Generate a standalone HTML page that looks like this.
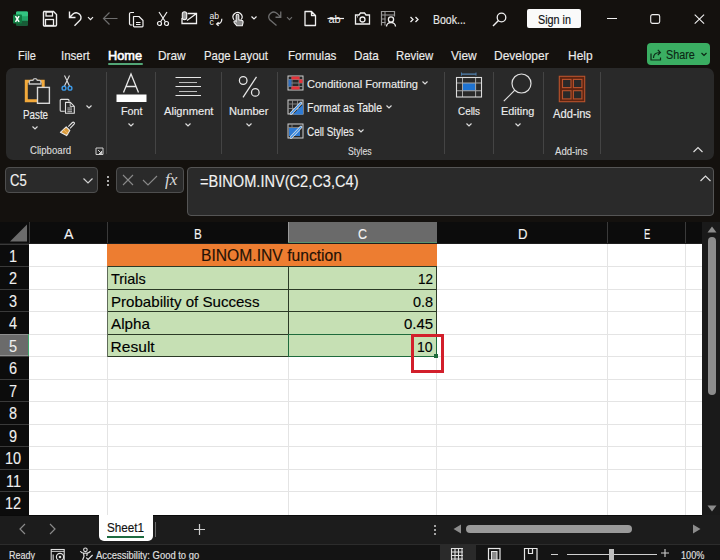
<!DOCTYPE html><html><head><meta charset="utf-8"><style>
html,body{margin:0;padding:0}
body{width:720px;height:560px;overflow:hidden;position:relative;background:#14110e;font-family:"Liberation Sans",sans-serif}
.t{position:absolute;white-space:nowrap;line-height:1;transform-origin:0 0;-webkit-text-stroke:0.15px currentColor}
.r{position:absolute;display:block}
svg.r{overflow:visible}
</style></head><body>
<svg class="r" style="left:12px;top:10px;" width="17" height="17" viewBox="0 0 17 17"><rect x="4" y="1.5" width="12" height="14" rx="1.5" fill="#21a366"/>
<rect x="4" y="1.5" width="12" height="4.7" fill="#33c481" rx="1"/>
<rect x="4" y="10.8" width="12" height="4.7" fill="#185c37"/>
<rect x="1" y="4.5" width="9" height="9" rx="1" fill="#107c41"/>
<path d="M3.5 6.2l3.6 5.6M7.1 6.2l-3.6 5.6" stroke="#fff" stroke-width="1.5"/></svg>
<svg class="r" style="left:41px;top:10px;" width="17" height="17" viewBox="0 0 17 17"><path d="M2.5 1.5h10l3 3v10.5a1 1 0 0 1-1 1h-11a1 1 0 0 1-1-1v-12.5a1 1 0 0 1 1-1z" fill="none" stroke="#f0f0f0" stroke-width="1.4"/>
<rect x="5" y="2" width="6.5" height="4" fill="none" stroke="#f0f0f0" stroke-width="1.3"/>
<rect x="4.5" y="9.5" width="8" height="6" fill="none" stroke="#f0f0f0" stroke-width="1.3"/></svg>
<svg class="r" style="left:62px;top:6px;" width="36" height="24" viewBox="0 0 36 24"><path d="M7.5 5.5V11.5H13.5M8 11L11.5 7.5A4.9 4.9 0 0 1 18.5 13.7L12.5 19.7" fill="none" stroke="#f0f0f0" stroke-width="1.4"/><path d="M26 11.2l2.5 2.5l2.5-2.5" fill="none" stroke="#f0f0f0" stroke-width="1.2"/></svg>
<svg class="r" style="left:102px;top:11px;" width="16" height="15" viewBox="0 0 16 15"><path d="M1.5 7.5h14M7.5 1.5l-6 6l6 6" fill="none" stroke="#6e6e6e" stroke-width="1.2"/></svg>
<svg class="r" style="left:128px;top:11px;" width="17" height="16" viewBox="0 0 17 16"><path d="M6 1.5h-3a1.5 1.5 0 0 0-1.5 1.5v9.5a1.5 1.5 0 0 0 1.5 1.5h1.5" fill="none" stroke="#f0f0f0" stroke-width="1.2"/>
<path d="M5.5 5.5h5.5l4 4v5.5a0.8 0.8 0 0 1-0.8 0.8h-7.9a0.8 0.8 0 0 1-0.8-0.8z" fill="none" stroke="#f0f0f0" stroke-width="1.2" stroke-linejoin="round"/>
<path d="M8 11.5h4.5M8 13.5h4.5" stroke="#f0f0f0" stroke-width="1"/></svg>
<svg class="r" style="left:156px;top:11px;" width="14" height="16" viewBox="0 0 14 16"><path d="M3 1l6.5 10M11 1l-6.5 10" fill="none" stroke="#f0f0f0" stroke-width="1.2"/>
<circle cx="3.5" cy="12.5" r="2" fill="none" stroke="#f0f0f0" stroke-width="1.2"/><circle cx="10.5" cy="12.5" r="2" fill="none" stroke="#f0f0f0" stroke-width="1.2"/></svg>
<svg class="r" style="left:180px;top:10px;" width="18" height="16" viewBox="0 0 18 16"><path d="M2 8V13.5H16.5V3.5H7.5M7 10.5L16.5 3.5" fill="none" stroke="#f0f0f0" stroke-width="1.3"/>
<rect x="2.3" y="1.8" width="4.4" height="7.8" rx="2.2" fill="#9a9a9a" stroke="#f0f0f0" stroke-width="1.1"/></svg>
<svg class="r" style="left:208px;top:10px;" width="18" height="18" viewBox="0 0 18 18"><text x="1.6" y="8.8" font-size="8.6" font-family="Liberation Sans" fill="#f0f0f0" style="-webkit-text-stroke:0.25px #f0f0f0">ab</text>
<text x="1.6" y="15" font-size="8.6" font-family="Liberation Sans" fill="#f0f0f0" style="-webkit-text-stroke:0.25px #f0f0f0">c</text>
<path d="M13.8 8.8Q14 13.8 8.8 14M10.6 12.1L8.6 14L10.6 15.9" fill="none" stroke="#f0f0f0" stroke-width="1.2"/></svg>
<svg class="r" style="left:231px;top:10px;" width="14" height="17" viewBox="0 0 14 17"><path d="M3 9.8A4.5 4.5 0 1 1 10.3 9.5" fill="none" stroke="#f0f0f0" stroke-width="1.2"/>
<path d="M5.2 11.5V5.6a1.3 1.3 0 0 1 2.6 0V9.8l3 0.6a1.6 1.6 0 0 1 1.3 1.9l-0.8 3.4H5.8L3.2 12.6a1.1 1.1 0 0 1 1.6-1.5z" fill="#8c8c8c" stroke="#f0f0f0" stroke-width="1.1"/></svg>
<svg class="r" style="left:250px;top:15px;" width="8" height="6" viewBox="0 0 8 6"><path d="M1.5 1.5l2.5 2.5l2.5-2.5" fill="none" stroke="#f0f0f0" stroke-width="1.2"/></svg>
<svg class="r" style="left:262px;top:6px;" width="36" height="24" viewBox="0 0 36 24"><path d="M18.75 5.5V11.25H13.5M18.5 10.9L15 7.4A4.9 4.9 0 0 0 7.5 13.5L14.5 19.5" fill="none" stroke="#6e6e6e" stroke-width="1.3"/><path d="M25 11.2l2.5 2.5l2.5-2.5" fill="none" stroke="#6e6e6e" stroke-width="1.1"/></svg>
<svg class="r" style="left:303px;top:10px;" width="14" height="17" viewBox="0 0 14 17"><path d="M2 1.5h6.5l4 4v10h-10.5z M8.5 1.5v4h4" fill="none" stroke="#f0f0f0" stroke-width="1.3" stroke-linejoin="round"/></svg>
<svg class="r" style="left:327px;top:12px;" width="18" height="13" viewBox="0 0 18 13"><text x="1.5" y="10.5" font-size="11" font-family="Liberation Sans" fill="#f0f0f0">ab</text><path d="M0.5 6.5h16.5" stroke="#f0f0f0" stroke-width="1.2"/></svg>
<svg class="r" style="left:354px;top:11px;" width="17" height="15" viewBox="0 0 17 15"><path d="M1.5 4h3.5l1.5-2h4l1.5 2h3.5v9h-14z" fill="none" stroke="#f0f0f0" stroke-width="1.3"/><circle cx="8.5" cy="8.5" r="2.5" fill="none" stroke="#f0f0f0" stroke-width="1.3"/><circle cx="3.5" cy="5.8" r="0.6" fill="#f0f0f0"/></svg>
<svg class="r" style="left:380px;top:10px;" width="17" height="17" viewBox="0 0 17 17"><path d="M1.5 15.5v-14h13v5" fill="none" stroke="#9a9a9a" stroke-width="1.2"/><path d="M1.5 5h13M5 1.5v14M1.5 9h4M1.5 12.5h4" stroke="#9a9a9a" stroke-width="1"/>
<circle cx="11" cy="9.5" r="2.6" fill="#14110e" stroke="#f0f0f0" stroke-width="1.3"/><path d="M6.5 16.5a4.5 4 0 0 1 9 0" fill="none" stroke="#f0f0f0" stroke-width="1.3"/></svg>
<svg class="r" style="left:409px;top:16px;" width="11" height="7" viewBox="0 0 11 7"><path d="M1.5 1l2.5 2.5l-2.5 2.5M6.5 1l2.5 2.5l-2.5 2.5" fill="none" stroke="#f0f0f0" stroke-width="1.3"/></svg>
<div class="t" style="left:433.00px;top:13.74px;font-size:12.72px;color:#e8e8e8;transform:scaleX(0.8272);">Book...</div>
<svg class="r" style="left:492px;top:12px;" width="16" height="15" viewBox="0 0 16 15"><circle cx="9.5" cy="5.5" r="4.3" fill="none" stroke="#f0f0f0" stroke-width="1.3"/><path d="M6.5 8.5l-5.5 5.5" stroke="#f0f0f0" stroke-width="1.4"/></svg>
<div class="r" style="left:527px;top:9px;width:54px;height:19px;background:#fafafa;border-radius:2px;"></div>
<div class="t" style="left:537.50px;top:13.74px;font-size:12.72px;color:#111;transform:scaleX(0.8485);">Sign in</div>
<div class="r" style="left:607px;top:18px;width:10px;height:1px;background:#f0f0f0;"></div>
<svg class="r" style="left:649px;top:13px;" width="13" height="12" viewBox="0 0 13 12"><rect x="1.7" y="1.6" width="9" height="8.8" rx="1.8" fill="none" stroke="#f0f0f0" stroke-width="1.1"/></svg>
<svg class="r" style="left:693px;top:13px;" width="13" height="12" viewBox="0 0 13 12"><path d="M1.7 1.6l9.4 9M11.1 1.6l-9.4 9" stroke="#f0f0f0" stroke-width="1.1"/></svg>
<div class="t" style="left:18.00px;top:49.99px;font-size:12.72px;color:#ececec;transform:scaleX(0.8663);">File</div>
<div class="t" style="left:60.50px;top:49.99px;font-size:12.72px;color:#ececec;transform:scaleX(0.9039);">Insert</div>
<div class="t" style="left:158.30px;top:49.99px;font-size:12.72px;color:#ececec;transform:scaleX(0.9324);">Draw</div>
<div class="t" style="left:204.30px;top:49.99px;font-size:12.72px;color:#ececec;transform:scaleX(0.8961);">Page Layout</div>
<div class="t" style="left:288.30px;top:49.99px;font-size:12.72px;color:#ececec;transform:scaleX(0.9131);">Formulas</div>
<div class="t" style="left:354.30px;top:49.99px;font-size:12.72px;color:#ececec;transform:scaleX(0.9191);">Data</div>
<div class="t" style="left:396.00px;top:49.99px;font-size:12.72px;color:#ececec;transform:scaleX(0.8936);">Review</div>
<div class="t" style="left:451.00px;top:49.99px;font-size:12.72px;color:#ececec;transform:scaleX(0.9390);">View</div>
<div class="t" style="left:494.30px;top:49.99px;font-size:12.72px;color:#ececec;transform:scaleX(0.9436);">Developer</div>
<div class="t" style="left:567.70px;top:49.99px;font-size:12.72px;color:#ececec;transform:scaleX(0.9403);">Help</div>
<div class="t" style="left:108.00px;top:49.99px;font-size:12.72px;color:#ffffff;transform:scaleX(1.0020);-webkit-text-stroke:0.6px #fff;">Home</div>
<div class="r" style="left:108px;top:63px;width:35px;height:2px;background:#52a676;border-radius:1px;"></div>
<div class="r" style="left:647px;top:43px;width:63px;height:22px;background:#3aae62;border-radius:4px;"></div>
<svg class="r" style="left:649px;top:48px;" width="14" height="13" viewBox="0 0 14 13"><path d="M2 5.5v6.5h9.5v-2.5" fill="none" stroke="#0d2a17" stroke-width="1.2"/><path d="M4.5 10c0-4 2.5-5.5 6.5-5.5M8.8 1.8l2.6 2.7l-2.6 2.7" fill="none" stroke="#0d2a17" stroke-width="1.2"/></svg>
<div class="t" style="left:666.25px;top:48.43px;font-size:13.08px;color:#0b2613;transform:scaleX(0.8238);">Share</div>
<svg class="r" style="left:700px;top:52px;" width="8" height="5" viewBox="0 0 8 5"><path d="M1.5 1l2.5 2.5l2.5-2.5" fill="none" stroke="#0b2613" stroke-width="1.2"/></svg>
<div class="r" style="left:6px;top:68px;width:708px;height:92px;background:#292929;border-radius:7px;"></div>
<div class="r" style="left:106px;top:72px;width:1px;height:82px;background:#444444;"></div>
<div class="r" style="left:155px;top:72px;width:1px;height:82px;background:#444444;"></div>
<div class="r" style="left:221px;top:72px;width:1px;height:82px;background:#444444;"></div>
<div class="r" style="left:277px;top:72px;width:1px;height:82px;background:#444444;"></div>
<div class="r" style="left:444px;top:72px;width:1px;height:82px;background:#444444;"></div>
<div class="r" style="left:493px;top:72px;width:1px;height:82px;background:#444444;"></div>
<div class="r" style="left:543px;top:72px;width:1px;height:82px;background:#444444;"></div>
<div class="r" style="left:600px;top:72px;width:1px;height:82px;background:#444444;"></div>
<svg class="r" style="left:20px;top:72px;" width="36" height="36" viewBox="0 0 36 36"><path d="M17 28.7H6.3V9.2H23.2V15" fill="none" stroke="#f2a93b" stroke-width="3"/>
<path d="M9.3 12V9.8Q9.3 8.3 10.8 8.3H12.9A2.3 2.3 0 0 1 17.3 8.3H19.4Q20.9 8.3 20.9 9.8V12Z" fill="#292929" stroke="#c4c4c4" stroke-width="1.3"/>
<rect x="17.5" y="15.4" width="11.9" height="15.9" fill="#292929" stroke="#d8d8d8" stroke-width="1.4"/></svg>
<div class="t" style="left:22.60px;top:108.80px;font-size:12.35px;color:#ececec;transform:scaleX(0.7945);">Paste</div>
<svg class="r" style="left:31px;top:125px;" width="8" height="6" viewBox="0 0 8 6"><path d="M1.5 1.5l2.5 2.5l2.5-2.5" fill="none" stroke="#dcdcdc" stroke-width="1.2"/></svg>
<svg class="r" style="left:60px;top:74px;" width="14" height="17" viewBox="0 0 14 17"><path d="M4.5 1.5l5 10.5M9.5 1.5l-5 10.5" fill="none" stroke="#dedede" stroke-width="1.1"/>
<circle cx="4" cy="14.2" r="1.9" fill="none" stroke="#3d9be9" stroke-width="1.4"/><circle cx="10" cy="14.2" r="1.9" fill="none" stroke="#3d9be9" stroke-width="1.4"/></svg>
<svg class="r" style="left:59px;top:98px;" width="17" height="17" viewBox="0 0 17 17"><path d="M5.8 13.3H2.2a1 1 0 0 1-1-1V2.4a1 1 0 0 1 1-1H9a1 1 0 0 1 1 1V3.6" fill="none" stroke="#e0e0e0" stroke-width="1.1"/>
<path d="M6.5 4.4H11.4L15.3 8.3V15.3H6.5Z" fill="none" stroke="#e0e0e0" stroke-width="1.1" stroke-linejoin="round"/><path d="M11.2 4.6V8.4H15" fill="none" stroke="#e0e0e0" stroke-width="0.9"/>
<path d="M8.4 10h4.6M8.4 11.9h4.6M8.4 13.7h4.6" stroke="#cfcfcf" stroke-width="0.9"/></svg>
<svg class="r" style="left:85px;top:104px;" width="8" height="6" viewBox="0 0 8 6"><path d="M1.5 1.5l2.5 2.5l2.5-2.5" fill="none" stroke="#dcdcdc" stroke-width="1.2"/></svg>
<svg class="r" style="left:59px;top:120px;" width="17" height="17" viewBox="0 0 17 17"><path d="M9.3 6.6L13.4 2.5a1.2 1.2 0 0 1 1.7 1.7L11 8.3" fill="none" stroke="#e4e4e4" stroke-width="1.1"/>
<path d="M7.2 6.9L10.8 10.5L7.6 15.6L1.4 12.3Z" fill="#d99a3a" stroke="#e8e8e8" stroke-width="1.1" stroke-linejoin="round"/>
<path d="M4.6 9.5L9.2 14" stroke="#f4c27a" stroke-width="0.8"/></svg>
<div class="t" style="left:29.50px;top:145.29px;font-size:11.19px;color:#dcdcdc;transform:scaleX(0.8601);">Clipboard</div>
<svg class="r" style="left:95px;top:147px;" width="9" height="8" viewBox="0 0 9 8"><path d="M1 1h7v6.5h-7z" fill="none" stroke="#cfcfcf" stroke-width="1"/><path d="M3 3l3.5 3.5M6.5 4v2.5h-2.5" fill="none" stroke="#cfcfcf" stroke-width="1"/></svg>
<svg class="r" style="left:115px;top:73px;" width="33" height="30" viewBox="0 0 33 30"><path d="M8.5 19.5l7.5-18.5l7.5 18.5M11 13.5h10" fill="none" stroke="#e8e8e8" stroke-width="1.3"/>
<rect x="1.5" y="21.5" width="30" height="7.5" fill="#ffffff"/></svg>
<div class="t" style="left:120.50px;top:106.46px;font-size:11.34px;color:#ececec;transform:scaleX(0.9477);">Font</div>
<svg class="r" style="left:127px;top:122px;" width="8" height="6" viewBox="0 0 8 6"><path d="M1.5 1.5l2.5 2.5l2.5-2.5" fill="none" stroke="#dcdcdc" stroke-width="1.2"/></svg>
<svg class="r" style="left:174px;top:76px;" width="28" height="22" viewBox="0 0 28 22"><path d="M1.5 1.5h25.5M1.5 10.5h25.5M1.5 19.5h25.5" stroke="#e6e6e6" stroke-width="1.1"/><path d="M5 6.5h18M5 15.5h18" stroke="#bdbdbd" stroke-width="1.1"/></svg>
<div class="t" style="left:163.75px;top:106.46px;font-size:11.34px;color:#ececec;transform:scaleX(0.9818);">Alignment</div>
<svg class="r" style="left:184px;top:122px;" width="8" height="6" viewBox="0 0 8 6"><path d="M1.5 1.5l2.5 2.5l2.5-2.5" fill="none" stroke="#dcdcdc" stroke-width="1.2"/></svg>
<svg class="r" style="left:236px;top:75px;" width="26" height="24" viewBox="0 0 26 24"><circle cx="7.2" cy="5.5" r="3.8" fill="none" stroke="#e8e8e8" stroke-width="1.25"/><circle cx="19.3" cy="17.4" r="3.8" fill="none" stroke="#e8e8e8" stroke-width="1.25"/><path d="M20.5 1.8L7 22.3" stroke="#e8e8e8" stroke-width="1.25"/></svg>
<div class="t" style="left:229.25px;top:106.46px;font-size:11.34px;color:#ececec;transform:scaleX(0.9795);">Number</div>
<svg class="r" style="left:245px;top:122px;" width="8" height="6" viewBox="0 0 8 6"><path d="M1.5 1.5l2.5 2.5l2.5-2.5" fill="none" stroke="#dcdcdc" stroke-width="1.2"/></svg>
<svg class="r" style="left:287px;top:75px;" width="17" height="16" viewBox="0 0 17 16"><rect x="1" y="1" width="15" height="14" fill="none" stroke="#cfcfcf" stroke-width="1"/>
<path d="M1 4.5h15M1 8h15M1 11.5h15M5 1v14M12 1v14" stroke="#8a8a8a" stroke-width="0.9"/>
<rect x="4.5" y="1.5" width="8" height="3" fill="#e5323a"/><rect x="4.5" y="11.5" width="8" height="3" fill="#e5323a"/>
<rect x="1.5" y="4.5" width="3" height="7" fill="#2f6fc0"/><rect x="12" y="4.5" width="3.5" height="3.5" fill="#e5323a"/></svg>
<div class="t" style="left:307.00px;top:78.42px;font-size:11.63px;color:#ececec;transform:scaleX(0.9488);">Conditional Formatting</div>
<svg class="r" style="left:421px;top:80px;" width="8" height="6" viewBox="0 0 8 6"><path d="M1.5 1.5l2.5 2.5l2.5-2.5" fill="none" stroke="#dcdcdc" stroke-width="1.2"/></svg>
<svg class="r" style="left:287px;top:99px;" width="17" height="16" viewBox="0 0 17 16"><rect x="1" y="1" width="15" height="14" fill="none" stroke="#cfcfcf" stroke-width="1"/>
<path d="M1 5h15M1 9.5h15M5.5 1v14M10.5 1v14" stroke="#8a8a8a" stroke-width="0.9"/>
<path d="M6 15.5L16 5.5V15.5Z" fill="#2f7bd4"/>
<path d="M4 14.5L14 4" stroke="#e6e6e6" stroke-width="2.6" stroke-linecap="round"/><path d="M4 14.5L14 4" stroke="#3a8ee6" stroke-width="1.2" stroke-linecap="round"/></svg>
<div class="t" style="left:307.00px;top:101.86px;font-size:11.99px;color:#ececec;transform:scaleX(0.8746);">Format as Table</div>
<svg class="r" style="left:385px;top:104px;" width="8" height="6" viewBox="0 0 8 6"><path d="M1.5 1.5l2.5 2.5l2.5-2.5" fill="none" stroke="#dcdcdc" stroke-width="1.2"/></svg>
<svg class="r" style="left:287px;top:123px;" width="17" height="16" viewBox="0 0 17 16"><rect x="1" y="1" width="15" height="14" fill="none" stroke="#cfcfcf" stroke-width="1"/>
<path d="M1 4.5h15M5 1v3.5" stroke="#8a8a8a" stroke-width="0.9"/>
<rect x="2" y="5" width="11" height="8" fill="#2f7bd4"/>
<path d="M4 14.5L14 4" stroke="#e6e6e6" stroke-width="2.6" stroke-linecap="round"/><path d="M4 14.5L14 4" stroke="#3a8ee6" stroke-width="1.2" stroke-linecap="round"/></svg>
<div class="t" style="left:307.00px;top:125.75px;font-size:12.06px;color:#ececec;transform:scaleX(0.8203);">Cell Styles</div>
<svg class="r" style="left:357px;top:128px;" width="8" height="6" viewBox="0 0 8 6"><path d="M1.5 1.5l2.5 2.5l2.5-2.5" fill="none" stroke="#dcdcdc" stroke-width="1.2"/></svg>
<div class="t" style="left:348.25px;top:146.03px;font-size:10.90px;color:#dcdcdc;transform:scaleX(0.8001);">Styles</div>
<svg class="r" style="left:454px;top:71px;" width="30" height="28" viewBox="0 0 30 28"><path d="M7.5 3.1h14.5" stroke="#5b93c9" stroke-width="1.1"/><path d="M7.5 1.5v3.2M22 1.5v3.2" stroke="#4a7aa8" stroke-width="1"/>
<rect x="8.5" y="12" width="13.1" height="7.75" fill="#1f73d1"/>
<path d="M2.5 12h25M2.5 19.75h25M8.5 6.5v19.5M21.6 6.5v19.5" stroke="#a8a8a8" stroke-width="1"/>
<rect x="2.5" y="6.5" width="25" height="19.5" fill="none" stroke="#dcdcdc" stroke-width="1.1"/></svg>
<div class="t" style="left:457.50px;top:106.46px;font-size:11.34px;color:#ececec;transform:scaleX(0.8729);">Cells</div>
<svg class="r" style="left:465px;top:122px;" width="8" height="6" viewBox="0 0 8 6"><path d="M1.5 1.5l2.5 2.5l2.5-2.5" fill="none" stroke="#dcdcdc" stroke-width="1.2"/></svg>
<svg class="r" style="left:502px;top:72px;" width="32" height="31" viewBox="0 0 32 31"><circle cx="19.5" cy="11.5" r="9.5" fill="none" stroke="#e0e0e0" stroke-width="1.2"/><path d="M12.8 18.2l-11 11" stroke="#e0e0e0" stroke-width="1.2"/></svg>
<div class="t" style="left:501.25px;top:106.46px;font-size:11.34px;color:#ececec;transform:scaleX(0.9591);">Editing</div>
<svg class="r" style="left:514px;top:122px;" width="8" height="6" viewBox="0 0 8 6"><path d="M1.5 1.5l2.5 2.5l2.5-2.5" fill="none" stroke="#dcdcdc" stroke-width="1.2"/></svg>
<svg class="r" style="left:557px;top:74px;" width="30" height="30" viewBox="0 0 30 30"><rect x="2.3" y="2.3" width="25.4" height="25.4" fill="#5e2410" stroke="#b9532d" stroke-width="1.1"/>
<rect x="5.5" y="5.4" width="8.5" height="8.2" fill="#292929" stroke="#b9532d" stroke-width="1.1"/><rect x="16.4" y="5.4" width="8.5" height="8.2" fill="#292929" stroke="#b9532d" stroke-width="1.1"/>
<rect x="5.5" y="16.7" width="8.5" height="8.2" fill="#292929" stroke="#b9532d" stroke-width="1.1"/><rect x="16.4" y="16.7" width="8.5" height="8.2" fill="#292929" stroke="#b9532d" stroke-width="1.1"/></svg>
<div class="t" style="left:552.50px;top:107.61px;font-size:11.99px;color:#ececec;transform:scaleX(0.9345);">Add-ins</div>
<div class="t" style="left:555.00px;top:146.03px;font-size:10.90px;color:#dcdcdc;transform:scaleX(0.8792);">Add-ins</div>
<svg class="r" style="left:692px;top:145px;" width="12" height="9" viewBox="0 0 12 9"><path d="M1.5 7l4.5-4.5l4.5 4.5" fill="none" stroke="#dcdcdc" stroke-width="1.2"/></svg>
<div class="r" style="left:5px;top:167px;width:93px;height:26px;background:#2a2a2a;border:1px solid #4e4e4e;border-radius:4px;box-sizing:border-box;"></div>
<div class="t" style="left:10.30px;top:172.82px;font-size:16.57px;color:#f2f2f2;transform:scaleX(0.7886);">C5</div>
<svg class="r" style="left:82px;top:177px;" width="12" height="8" viewBox="0 0 12 8"><path d="M1.5 1.5l4.5 4.5l4.5-4.5" fill="none" stroke="#cfcfcf" stroke-width="1.2"/></svg>
<div class="r" style="left:106.5px;top:176px;width:2px;height:2px;background:#e0e0e0;border-radius:1px;"></div>
<div class="r" style="left:106.5px;top:180px;width:2px;height:2px;background:#e0e0e0;border-radius:1px;"></div>
<div class="r" style="left:106.5px;top:184px;width:2px;height:2px;background:#e0e0e0;border-radius:1px;"></div>
<div class="r" style="left:116px;top:167px;width:68px;height:26px;background:#2a2a2a;border:1px solid #4e4e4e;border-radius:4px;box-sizing:border-box;"></div>
<svg class="r" style="left:121px;top:173px;" width="14" height="14" viewBox="0 0 14 14"><path d="M2 2l10 10M12 2l-10 10" stroke="#8a8a8a" stroke-width="1.1"/></svg>
<svg class="r" style="left:141px;top:173px;" width="18" height="14" viewBox="0 0 18 14"><path d="M2 7l5 5l9-9" fill="none" stroke="#8a8a8a" stroke-width="1.1"/></svg>
<div class="t" style="left:165.00px;top:172.20px;font-size:16.00px;color:#d8d8d8;transform:scaleX(1.0684);font-family:'Liberation Serif',serif;font-style:italic;-webkit-text-stroke:0;">fx</div>
<div class="r" style="left:187px;top:167px;width:527px;height:49px;background:#2a2a2a;border:1px solid #555;border-radius:4px;box-sizing:border-box;"></div>
<div class="t" style="left:199.50px;top:173.77px;font-size:15.63px;color:#f2f2f2;transform:scaleX(0.9338);">=BINOM.INV(C2,C3,C4)</div>
<svg class="r" style="left:699px;top:174px;" width="13" height="9" viewBox="0 0 13 9"><path d="M1.5 7l5-5l5 5" fill="none" stroke="#dcdcdc" stroke-width="1.2"/></svg>
<div class="r" style="left:0px;top:222px;width:702px;height:22px;background:#0c0c0c;"></div>
<div class="r" style="left:0px;top:244px;width:29px;height:271px;background:#0c0c0c;"></div>
<div class="r" style="left:29px;top:244px;width:673px;height:271px;background:#ffffff;"></div>
<div class="r" style="left:29px;top:266px;width:673px;height:1px;background:#e4e4e4;"></div>
<div class="r" style="left:29px;top:289px;width:673px;height:1px;background:#e4e4e4;"></div>
<div class="r" style="left:29px;top:311px;width:673px;height:1px;background:#e4e4e4;"></div>
<div class="r" style="left:29px;top:334px;width:673px;height:1px;background:#e4e4e4;"></div>
<div class="r" style="left:29px;top:356px;width:673px;height:1px;background:#e4e4e4;"></div>
<div class="r" style="left:29px;top:379px;width:673px;height:1px;background:#e4e4e4;"></div>
<div class="r" style="left:29px;top:401px;width:673px;height:1px;background:#e4e4e4;"></div>
<div class="r" style="left:29px;top:424px;width:673px;height:1px;background:#e4e4e4;"></div>
<div class="r" style="left:29px;top:446px;width:673px;height:1px;background:#e4e4e4;"></div>
<div class="r" style="left:29px;top:469px;width:673px;height:1px;background:#e4e4e4;"></div>
<div class="r" style="left:29px;top:491px;width:673px;height:1px;background:#e4e4e4;"></div>
<div class="r" style="left:107px;top:244px;width:1px;height:271px;background:#e4e4e4;"></div>
<div class="r" style="left:288px;top:244px;width:1px;height:271px;background:#e4e4e4;"></div>
<div class="r" style="left:436px;top:244px;width:1px;height:271px;background:#e4e4e4;"></div>
<div class="r" style="left:607px;top:244px;width:1px;height:271px;background:#e4e4e4;"></div>
<div class="r" style="left:685px;top:244px;width:1px;height:271px;background:#e4e4e4;"></div>
<div class="r" style="left:29px;top:222px;width:1px;height:22px;background:#3a3a3a;"></div>
<div class="r" style="left:107px;top:222px;width:1px;height:22px;background:#3a3a3a;"></div>
<div class="r" style="left:288px;top:222px;width:1px;height:22px;background:#3a3a3a;"></div>
<div class="r" style="left:436px;top:222px;width:1px;height:22px;background:#3a3a3a;"></div>
<div class="r" style="left:607px;top:222px;width:1px;height:22px;background:#3a3a3a;"></div>
<div class="r" style="left:685px;top:222px;width:1px;height:22px;background:#3a3a3a;"></div>
<div class="r" style="left:0px;top:244px;width:29px;height:1px;background:#3a3a3a;"></div>
<div class="r" style="left:0px;top:266px;width:29px;height:1px;background:#3a3a3a;"></div>
<div class="r" style="left:0px;top:289px;width:29px;height:1px;background:#3a3a3a;"></div>
<div class="r" style="left:0px;top:311px;width:29px;height:1px;background:#3a3a3a;"></div>
<div class="r" style="left:0px;top:334px;width:29px;height:1px;background:#3a3a3a;"></div>
<div class="r" style="left:0px;top:356px;width:29px;height:1px;background:#3a3a3a;"></div>
<div class="r" style="left:0px;top:379px;width:29px;height:1px;background:#3a3a3a;"></div>
<div class="r" style="left:0px;top:401px;width:29px;height:1px;background:#3a3a3a;"></div>
<div class="r" style="left:0px;top:424px;width:29px;height:1px;background:#3a3a3a;"></div>
<div class="r" style="left:0px;top:446px;width:29px;height:1px;background:#3a3a3a;"></div>
<div class="r" style="left:0px;top:469px;width:29px;height:1px;background:#3a3a3a;"></div>
<div class="r" style="left:0px;top:491px;width:29px;height:1px;background:#3a3a3a;"></div>
<div class="r" style="left:0px;top:243px;width:702px;height:1px;background:#1e1e1e;"></div>
<svg class="r" style="left:9px;top:224px;" width="19" height="18" viewBox="0 0 19 18"><path d="M18 0.5v17h-17z" fill="#6b6b6b"/></svg>
<div class="r" style="left:288px;top:222px;width:149px;height:21px;background:#6a6a6a;"></div>
<div class="r" style="left:288px;top:222px;width:1px;height:21px;background:#9a9a9a;"></div>
<div class="r" style="left:288px;top:242px;width:149px;height:1px;background:#5a9470;"></div>
<div class="r" style="left:0px;top:334px;width:29px;height:22px;background:#6b6b6b;border-top:1px solid #8f8f8f;border-bottom:1px solid #8f8f8f;box-sizing:border-box;"></div>
<div class="r" style="left:28px;top:334px;width:1px;height:22px;background:#3fa36a;"></div>
<div class="t" style="left:63.75px;top:227.35px;font-size:14.53px;color:#f4f4f4;transform:scaleX(0.9799);-webkit-text-stroke:0.1px;">A</div>
<div class="t" style="left:194.30px;top:227.35px;font-size:14.53px;color:#f4f4f4;transform:scaleX(0.8046);-webkit-text-stroke:0.1px;">B</div>
<div class="t" style="left:358.00px;top:227.35px;font-size:14.53px;color:#f4f4f4;transform:scaleX(0.8576);-webkit-text-stroke:0.1px;">C</div>
<div class="t" style="left:517.60px;top:227.35px;font-size:14.53px;color:#f4f4f4;transform:scaleX(0.9053);-webkit-text-stroke:0.1px;">D</div>
<div class="t" style="left:643.70px;top:227.35px;font-size:14.53px;color:#f4f4f4;transform:scaleX(0.6498);-webkit-text-stroke:0.1px;">E</div>
<div class="t" style="left:9.37px;top:247.92px;font-size:16.10px;color:#f0f0f0;transform:scaleX(0.9000);-webkit-text-stroke:0.1px;">1</div>
<div class="t" style="left:9.37px;top:269.92px;font-size:16.10px;color:#f0f0f0;transform:scaleX(0.9000);-webkit-text-stroke:0.1px;">2</div>
<div class="t" style="left:9.37px;top:292.92px;font-size:16.10px;color:#f0f0f0;transform:scaleX(0.9000);-webkit-text-stroke:0.1px;">3</div>
<div class="t" style="left:9.37px;top:314.92px;font-size:16.10px;color:#f0f0f0;transform:scaleX(0.9000);-webkit-text-stroke:0.1px;">4</div>
<div class="t" style="left:9.37px;top:337.92px;font-size:16.10px;color:#f0f0f0;transform:scaleX(0.9000);-webkit-text-stroke:0.1px;">5</div>
<div class="t" style="left:9.37px;top:359.92px;font-size:16.10px;color:#f0f0f0;transform:scaleX(0.9000);-webkit-text-stroke:0.1px;">6</div>
<div class="t" style="left:9.37px;top:382.92px;font-size:16.10px;color:#f0f0f0;transform:scaleX(0.9000);-webkit-text-stroke:0.1px;">7</div>
<div class="t" style="left:9.37px;top:404.92px;font-size:16.10px;color:#f0f0f0;transform:scaleX(0.9000);-webkit-text-stroke:0.1px;">8</div>
<div class="t" style="left:9.37px;top:427.92px;font-size:16.10px;color:#f0f0f0;transform:scaleX(0.9000);-webkit-text-stroke:0.1px;">9</div>
<div class="t" style="left:5.34px;top:449.92px;font-size:16.10px;color:#f0f0f0;transform:scaleX(0.9000);-webkit-text-stroke:0.1px;">10</div>
<div class="t" style="left:5.88px;top:472.92px;font-size:16.10px;color:#f0f0f0;transform:scaleX(0.9000);-webkit-text-stroke:0.1px;">11</div>
<div class="t" style="left:5.34px;top:494.92px;font-size:16.10px;color:#f0f0f0;transform:scaleX(0.9000);-webkit-text-stroke:0.1px;">12</div>
<div class="r" style="left:107px;top:244px;width:330px;height:22px;background:#ed7d31;"></div>
<div class="t" style="left:201.10px;top:247.96px;font-size:15.70px;color:#241206;transform:scaleX(0.9984);">BINOM.INV function</div>
<div class="r" style="left:107px;top:266px;width:329px;height:90px;background:#c6e0b4;"></div>
<div class="r" style="left:107px;top:266px;width:330px;height:1px;background:#2b3a26;"></div>
<div class="r" style="left:107px;top:289px;width:330px;height:1px;background:#2b3a26;"></div>
<div class="r" style="left:107px;top:311px;width:330px;height:1px;background:#2b3a26;"></div>
<div class="r" style="left:107px;top:334px;width:330px;height:1px;background:#2b3a26;"></div>
<div class="r" style="left:107px;top:356px;width:330px;height:1px;background:#2b3a26;"></div>
<div class="r" style="left:107px;top:266px;width:1px;height:91px;background:#5f6b59;"></div>
<div class="r" style="left:288px;top:266px;width:1px;height:91px;background:#2b3a26;"></div>
<div class="r" style="left:436px;top:266px;width:1px;height:91px;background:#2b3a26;"></div>




<div class="t" style="left:110.60px;top:270.58px;font-size:15.55px;color:#000;transform:scaleX(0.9296);">Trials</div>
<div class="t" style="left:110.60px;top:293.58px;font-size:15.55px;color:#000;transform:scaleX(0.9706);">Probability of Success</div>
<div class="t" style="left:110.60px;top:315.58px;font-size:15.55px;color:#000;transform:scaleX(0.9778);">Alpha</div>
<div class="t" style="left:110.60px;top:338.58px;font-size:15.55px;color:#000;transform:scaleX(1.0000);">Result</div>
<div class="t" style="left:417.90px;top:270.68px;font-size:15.55px;color:#000;transform:scaleX(0.8673);">12</div>
<div class="t" style="left:412.80px;top:293.68px;font-size:15.55px;color:#000;transform:scaleX(0.9298);">0.8</div>
<div class="t" style="left:403.80px;top:315.68px;font-size:15.55px;color:#000;transform:scaleX(0.9615);">0.45</div>
<div class="t" style="left:417.30px;top:338.88px;font-size:15.55px;color:#000;transform:scaleX(0.9020);">10</div>
<div class="r" style="left:288px;top:334px;width:149px;height:23px;background:transparent;border:1px solid #1e6b3c;box-sizing:border-box;"></div>
<div class="r" style="left:434px;top:354px;width:4px;height:4px;background:#1e6b3c;"></div>
<div class="r" style="left:411px;top:334px;width:33px;height:39px;background:transparent;border:3px solid #d21f2b;box-sizing:border-box;"></div>
<div class="r" style="left:0px;top:515px;width:720px;height:29px;background:#1c1c1c;"></div>
<div class="r" style="left:0px;top:515px;width:702px;height:1px;background:#0a0a0a;"></div>
<div class="r" style="left:702px;top:222px;width:18px;height:293px;background:#1a1a1a;"></div>
<svg class="r" style="left:707px;top:226px;" width="10" height="7" viewBox="0 0 10 7"><path d="M0.5 6.5l4.5-6l4.5 6z" fill="#8c8c8c"/></svg>
<div class="r" style="left:708px;top:237px;width:8px;height:158px;background:#8c8c8c;border-radius:4px;"></div>
<svg class="r" style="left:707px;top:505px;" width="10" height="7" viewBox="0 0 10 7"><path d="M0.5 0.5l4.5 6l4.5-6z" fill="#8c8c8c"/></svg>
<svg class="r" style="left:18px;top:523px;" width="9" height="12" viewBox="0 0 9 12"><path d="M7 1l-5 5l5 5" fill="none" stroke="#8a8a8a" stroke-width="1.2"/></svg>
<svg class="r" style="left:48px;top:523px;" width="9" height="12" viewBox="0 0 9 12"><path d="M2 1l5 5l-5 5" fill="none" stroke="#8a8a8a" stroke-width="1.2"/></svg>
<div class="r" style="left:99px;top:515px;width:54px;height:26px;background:#ffffff;border-radius:0 0 5px 5px;"></div>
<div class="t" style="left:107.10px;top:522.07px;font-size:12.50px;color:#111;transform:scaleX(0.9366);">Sheet1</div>
<div class="r" style="left:107px;top:536px;width:37px;height:1.6px;background:#1d6b40;"></div>
<div class="r" style="left:155px;top:522px;width:1px;height:15px;background:#6a6a6a;"></div>
<svg class="r" style="left:193px;top:523px;" width="13" height="13" viewBox="0 0 13 13"><path d="M6.5 1v11M1 6.5h11" stroke="#cfcfcf" stroke-width="1.2"/></svg>
<div class="r" style="left:434px;top:525px;width:2px;height:2px;background:#cfcfcf;border-radius:1px;"></div>
<div class="r" style="left:434px;top:529px;width:2px;height:2px;background:#cfcfcf;border-radius:1px;"></div>
<div class="r" style="left:434px;top:533px;width:2px;height:2px;background:#cfcfcf;border-radius:1px;"></div>
<svg class="r" style="left:453px;top:524px;" width="9" height="10" viewBox="0 0 9 10"><path d="M8 0.5v9l-7.5-4.5z" fill="#8c8c8c"/></svg>
<div class="r" style="left:466px;top:525px;width:166px;height:8px;background:#9a9a9a;border-radius:4px;"></div>
<svg class="r" style="left:692px;top:524px;" width="9" height="10" viewBox="0 0 9 10"><path d="M1 0.5v9l7.5-4.5z" fill="#8c8c8c"/></svg>
<div class="r" style="left:0px;top:544px;width:720px;height:16px;background:#141414;"></div>
<div class="r" style="left:0px;top:544px;width:720px;height:1px;background:#2c2c2c;"></div>
<div class="t" style="left:8.70px;top:549.83px;font-size:10.90px;color:#e0e0e0;transform:scaleX(0.8250);">Ready</div>
<svg class="r" style="left:50px;top:548px;" width="16" height="12" viewBox="0 0 16 12"><rect x="1.2" y="1.5" width="13" height="11" fill="none" stroke="#e0e0e0" stroke-width="1.1"/><path d="M1.2 3.4h13" stroke="#e0e0e0" stroke-width="0.9"/>
<path d="M3.2 6.5v6" stroke="#b0b0b0" stroke-width="1.4"/>
<circle cx="10" cy="9" r="3.6" fill="#141414" stroke="#e0e0e0" stroke-width="1.2"/><circle cx="10" cy="9" r="1.3" fill="#e0e0e0"/></svg>
<svg class="r" style="left:78px;top:546px;" width="18" height="14" viewBox="0 0 18 14"><circle cx="7.4" cy="3.8" r="1.8" fill="none" stroke="#e0e0e0" stroke-width="1.1"/>
<path d="M2.3 5.2Q3.8 7.6 7.4 7.2Q11 7.6 12.6 5.2M5.6 7.4L6 10.5L4.6 14M9.2 7.4L8.8 10" fill="none" stroke="#e0e0e0" stroke-width="1.2"/>
<path d="M8.2 11.6L10.1 13.5L14.6 9" fill="none" stroke="#e0e0e0" stroke-width="1.2"/></svg>
<div class="t" style="left:96.00px;top:549.83px;font-size:10.90px;color:#e0e0e0;transform:scaleX(0.8654);">Accessibility: Good to go</div>
<div class="r" style="left:440px;top:544px;width:36px;height:16px;background:#2a2a2a;"></div>
<svg class="r" style="left:450px;top:547px;" width="14" height="13" viewBox="0 0 14 13"><path d="M1.5 1v12M5 1v12M8.5 1v12M12 1v12M1 1.5h12M1 5h12M1 8.5h12M1 12h12" stroke="#e0e0e0" stroke-width="1.1"/></svg>
<svg class="r" style="left:487px;top:547px;" width="15" height="13" viewBox="0 0 15 13"><rect x="1.5" y="1.5" width="11.5" height="11.5" fill="none" stroke="#e6e6e6" stroke-width="1.2"/><rect x="4.5" y="4.5" width="5.5" height="8.5" fill="#8a8a8a" stroke="#e6e6e6" stroke-width="1"/></svg>
<svg class="r" style="left:523px;top:547px;" width="16" height="13" viewBox="0 0 16 13"><path d="M1.5 13V1.5H14V13M5.5 1.5V6.5H9.5V1.5" fill="none" stroke="#e6e6e6" stroke-width="1.2"/></svg>
<div class="r" style="left:551px;top:554px;width:7px;height:1px;background:#cfcfcf;"></div>
<div class="r" style="left:567px;top:554px;width:90px;height:1px;background:#cfcfcf;"></div>
<div class="r" style="left:609px;top:549px;width:5px;height:11px;background:#bdbdbd;"></div>
<svg class="r" style="left:660px;top:548px;" width="10" height="10" viewBox="0 0 10 10"><path d="M5 1v8M1 5h8" stroke="#cfcfcf" stroke-width="1.1"/></svg>
<div class="t" style="left:680.70px;top:549.59px;font-size:11.19px;color:#e0e0e0;transform:scaleX(0.8139);">100%</div>
</body></html>
